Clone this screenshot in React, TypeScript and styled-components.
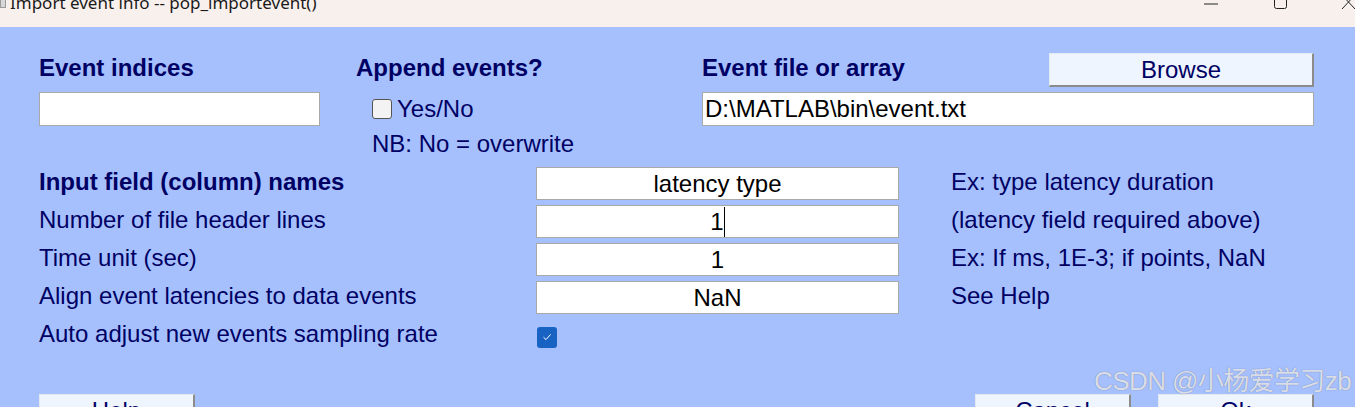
import React from "react";
import styled, { createGlobalStyle } from "styled-components";

const Global = createGlobalStyle`
  html, body { margin: 0; padding: 0; }
  body { width: 1355px; height: 407px; overflow: hidden; background: #a6c0fe; }
  * { box-sizing: border-box; }
`;

const Window = styled.div`
  position: relative;
  width: 1355px;
  height: 407px;
  overflow: hidden;
  background: #a6c0fe;
  font-family: "Liberation Sans", Arial, sans-serif;
  color: #000064;
`;

const TitleBar = styled.div`
  height: 27px;
  background: #f8f0ec;
  display: flex;
  align-items: flex-start;
  overflow: hidden;
`;

const AppIcon = styled.div`
  width: 6px;
  height: 10px;
  margin-top: -2px;
  border: 1px solid #9a9a9a;
  background: #d8d8d8;
`;

const Title = styled.div`
  font-family: "Noto Sans", "Open Sans", sans-serif;
  font-size: 17px;
  line-height: 17px;
  color: #1a1a1a;
  margin-top: -6px;
  margin-left: 4px;
  flex: 1;
`;

const Controls = styled.div`
  display: flex;
  align-items: flex-start;
  margin-top: -6px;
  margin-right: -28px;
`;

const CtrlBtn = styled.div`
  width: 69px;
  display: flex;
  justify-content: center;
`;

const Body = styled.div`
  padding: 26px 41px 0 39px;
`;

const TopGrid = styled.div`
  display: grid;
  grid-template-columns: 317px 346px 347px 265px;
  grid-template-rows: 34px 34px 26px;
  row-gap: 5px;
`;

const BoldLabel = styled.div`
  font-weight: bold;
  font-size: 24px;
  line-height: 28px;
  align-self: center;
  margin-bottom: 4px;
  white-space: nowrap;
`;

const Field = styled.div<{ $align?: "left" | "center" }>`
  background: #ffffff;
  border: 1px solid #a9a9a9;
  color: #000000;
  font-size: 24px;
  line-height: 31px;
  height: 33px;
  padding: 0 2px;
  text-align: ${(p) => p.$align ?? "center"};
  white-space: nowrap;
  overflow: hidden;
`;

const WideField = styled(Field)`
  grid-column: 3 / span 2;
  height: 34px;
`;

const IndicesField = styled(Field)`
  width: 281px;
  height: 34px;
`;

const Button = styled.div<{ $w?: number }>`
  width: ${(p) => (p.$w ? `${p.$w}px` : "auto")};
  height: 34px;
  background: #eef5ff;
  border-top: 1px solid #e4e8ef;
  border-left: 1px solid #e4e8ef;
  border-right: 2px solid #8c8c8c;
  border-bottom: 2px solid #8c8c8c;
  font-size: 24px;
  line-height: 31px;
  text-align: center;
  color: #000064;
`;

const CheckRow = styled.div`
  display: flex;
  align-items: center;
  padding-left: 16px;
  gap: 5px;
  font-size: 24px;
`;

const EmptyBox = styled.div`
  width: 20px;
  height: 20px;
  border: 1px solid #555;
  border-radius: 3px;
  background: #f3f3f3;
`;

const Note = styled.div`
  padding-left: 16px;
  font-size: 24px;
  line-height: 26px;
  white-space: nowrap;
`;

const FormGrid = styled.div`
  margin-top: 10px;
  display: grid;
  grid-template-columns: 497px 363px 1fr;
  grid-auto-rows: 33px;
  row-gap: 5px;
  align-items: center;
`;

const Label = styled.div<{ $bold?: boolean }>`
  font-size: 24px;
  font-weight: ${(p) => (p.$bold ? "bold" : "normal")};
  white-space: nowrap;
  margin-bottom: 3px;
`;

const Hint = styled.div`
  font-size: 24px;
  white-space: nowrap;
  padding-left: 52px;
  margin-bottom: 3px;
`;

const Caret = styled.span`
  display: inline-block;
  width: 1px;
  height: 30px;
  background: #000;
  vertical-align: top;
  margin-top: 1px;
`;

const BlueCheck = styled.div`
  width: 20px;
  height: 21px;
  border-radius: 3px;
  background: #1862c4;
  display: flex;
  align-items: center;
  justify-content: center;
  margin-left: 1px;
  margin-top: 3px;
`;

const ButtonRow = styled.div`
  margin-top: 42px;
  display: flex;
  justify-content: space-between;
`;

const RightButtons = styled.div`
  display: flex;
  gap: 27px;
`;

const Watermark = styled.div`
  position: absolute;
  right: 4px;
  top: 366px;
  font-family: "Liberation Sans", "Noto Sans CJK SC", sans-serif;
  font-size: 26px;
  line-height: 30px;
  color: rgba(234, 236, 242, 0.9);
  text-shadow: 0 0 1px rgba(80, 90, 120, 0.8);
  white-space: nowrap;
  letter-spacing: -0.6px;
`;

export default function App() {
  return (
    <>
      <Global />
      <Window>
        <TitleBar>
          <AppIcon />
          <Title>Import event info -- pop_importevent()</Title>
          <Controls>
            <CtrlBtn>
              <svg width="16" height="16" viewBox="0 0 16 16">
                <line x1="1" y1="10" x2="15" y2="10" stroke="#222" strokeWidth="1" />
              </svg>
            </CtrlBtn>
            <CtrlBtn>
              <svg width="16" height="16" viewBox="0 0 16 16">
                <rect x="2.5" y="-4" width="12" height="18.5" rx="2" fill="none" stroke="#222" strokeWidth="1" />
              </svg>
            </CtrlBtn>
            <CtrlBtn>
              <svg width="16" height="16" viewBox="0 0 16 16">
                <path d="M1 1 L14 15 M14 1 L1 15" stroke="#222" strokeWidth="1" fill="none" />
              </svg>
            </CtrlBtn>
          </Controls>
        </TitleBar>
        <Body>
          <TopGrid>
            <BoldLabel>Event indices</BoldLabel>
            <BoldLabel>Append events?</BoldLabel>
            <BoldLabel>Event file or array</BoldLabel>
            <Button>Browse</Button>

            <IndicesField />
            <CheckRow>
              <EmptyBox />
              <span>Yes/No</span>
            </CheckRow>
            <WideField $align="left">D:\MATLAB\bin\event.txt</WideField>

            <div />
            <Note>NB: No = overwrite</Note>
          </TopGrid>

          <FormGrid>
            <Label $bold>Input field (column) names</Label>
            <Field>latency type</Field>
            <Hint>Ex: type latency duration</Hint>

            <Label>Number of file header lines</Label>
            <Field>
              1<Caret />
            </Field>
            <Hint>(latency field required above)</Hint>

            <Label>Time unit (sec)</Label>
            <Field>1</Field>
            <Hint>Ex: If ms, 1E-3; if points, NaN</Hint>

            <Label>Align event latencies to data events</Label>
            <Field>NaN</Field>
            <Hint>See Help</Hint>

            <Label>Auto adjust new events sampling rate</Label>
            <BlueCheck>
              <svg width="12" height="12" viewBox="0 0 12 12">
                <path d="M2.5 6.2 L5 8.6 L9.6 3.4" fill="none" stroke="#ffffff" strokeWidth="1" />
              </svg>
            </BlueCheck>
            <div />
          </FormGrid>

          <ButtonRow>
            <Button $w={156}>Help</Button>
            <RightButtons>
              <Button $w={156}>Cancel</Button>
              <Button $w={156}>Ok</Button>
            </RightButtons>
          </ButtonRow>
        </Body>
        <Watermark>CSDN @小杨爱学习zb</Watermark>
      </Window>
    </>
  );
}
